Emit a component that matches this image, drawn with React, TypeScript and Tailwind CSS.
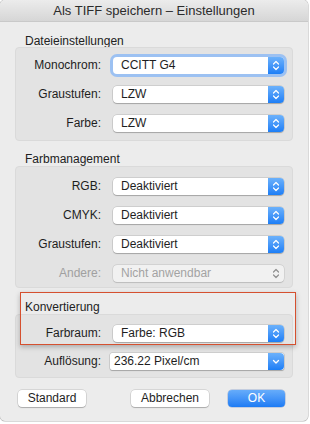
import React from 'react'

const font = { fontFamily: '"Liberation Sans", Arial, sans-serif' }

function UpDown({ color = 'white' }: { color?: string }) {
    return (
        <svg width="8" height="11" viewBox="0 0 8 11" fill="none">
            <path d="M1.5 4 L4 1.5 L6.5 4" stroke={color} strokeWidth="1.2" strokeLinecap="round" strokeLinejoin="round" />
            <path d="M1.5 7 L4 9.5 L6.5 7" stroke={color} strokeWidth="1.2" strokeLinecap="round" strokeLinejoin="round" />
        </svg>
    )
}

function Down() {
    return (
        <svg width="8" height="6" viewBox="0 0 8 6" fill="none">
            <path d="M1.5 1.5 L4 4 L6.5 1.5" stroke="white" strokeWidth="1.3" strokeLinecap="round" strokeLinejoin="round" />
        </svg>
    )
}

function Popup({ value, focused, disabled }: { value: string; focused?: boolean; disabled?: boolean }) {
    return (
        <div className={`flex h-[17px] w-[171px] items-center rounded-[4px] ${disabled ? 'bg-[#f1f1f1] shadow-[0_0_0_0.5px_rgba(0,0,0,0.12),0_0.5px_1px_rgba(0,0,0,0.12)]' : 'bg-white shadow-[0_0_0_0.5px_rgba(0,0,0,0.18),0_1px_1px_rgba(0,0,0,0.2)]'} ${focused ? 'ring-[3px] ring-[#9cc1f2]' : ''}`}>
            <span className={`flex-1 pl-[8px] text-[12px] leading-[17px] ${disabled ? 'text-[#a3a3a3]' : 'text-[#1e1e1e]'}`}>{value}</span>
            {disabled ? (
                <span className="flex h-[17px] w-[16px] items-center justify-center">
                    <UpDown color="#8f8f8f" />
                </span>
            ) : (
                <span className="flex h-[17px] w-[16px] items-center justify-center rounded-r-[4px] bg-gradient-to-b from-[#6bb1fb] to-[#1b7ef6]">
                    <UpDown />
                </span>
            )}
        </div>
    )
}

function Row({ label, children, disabled }: { label: string; children: React.ReactNode; disabled?: boolean }) {
    return (
        <div className="flex h-[17px] items-center">
            <span className={`w-[85px] text-right text-[12px] leading-[17px] ${disabled ? 'text-[#a0a0a0]' : 'text-[#1e1e1e]'}`}>{label}</span>
            <div className="ml-[12px]">{children}</div>
        </div>
    )
}

function Button({ label, primary, w }: { label: string; primary?: boolean; w: string }) {
    return (
        <div className={`flex h-[17px] ${w} items-center justify-center rounded-[4px] text-[12px] leading-[17px] ${primary ? 'bg-gradient-to-b from-[#66acfa] to-[#1b7bf4] text-white shadow-[0_0_0_0.5px_rgba(0,60,160,0.35)]' : 'bg-white text-[#1e1e1e] shadow-[0_0_0_0.5px_rgba(0,0,0,0.18),0_1px_1px_rgba(0,0,0,0.2)]'}`}>
            {label}
        </div>
    )
}

export default function App() {
    return (
        <div className="h-[424px] w-[310px] bg-white" style={font}>
            <div className="flex h-[421px] w-[308px] flex-col overflow-hidden rounded-[5px] bg-[#ececec] shadow-[0_0_0_0.5px_rgba(0,0,0,0.3)]">
                {/* title bar */}
                <div className="flex h-[22px] items-center justify-center border-b border-[#c9c9c9] bg-gradient-to-b from-[#ececec] to-[#d6d6d6] text-[13px] leading-[22px] text-[#2b2b2b]">
                    Als TIFF speichern – Einstellungen
                </div>

                <div className="flex flex-col px-[15px]">
                    {/* Dateieinstellungen */}
                    <div className="h-[25px] pl-[10px] pt-[12px] text-[12px] leading-[14px] text-[#222]">Dateieinstellungen</div>
                    <div className="flex flex-col gap-[12px] rounded-[4px] border border-[#dadada] bg-[#e3e3e3] pb-[8px] pt-[9px]">
                        <Row label="Monochrom:"><Popup value="CCITT G4" focused /></Row>
                        <Row label="Graustufen:"><Popup value="LZW" /></Row>
                        <Row label="Farbe:"><Popup value="LZW" /></Row>
                    </div>

                    {/* Farbmanagement */}
                    <div className="h-[25px] pl-[10px] pt-[11px] text-[12px] leading-[14px] text-[#222]">Farbmanagement</div>
                    <div className="flex flex-col gap-[12px] rounded-[4px] border border-[#dadada] bg-[#e3e3e3] pb-[5px] pt-[11px]">
                        <Row label="RGB:"><Popup value="Deaktiviert" /></Row>
                        <Row label="CMYK:"><Popup value="Deaktiviert" /></Row>
                        <Row label="Graustufen:"><Popup value="Deaktiviert" /></Row>
                        <Row label="Andere:" disabled><Popup value="Nicht anwendbar" disabled /></Row>
                    </div>

                    {/* Konvertierung */}
                    <div className="relative">
                        <div className="h-[26px] pl-[10px] pt-[12px] text-[12px] leading-[14px] text-[#222]">Konvertierung</div>
                        <div className="flex flex-col gap-[11px] rounded-[4px] border border-[#dadada] bg-[#e3e3e3] pb-[7px] pt-[10px]">
                            <Row label="Farbraum:"><Popup value="Farbe: RGB" /></Row>
                            <div className="flex h-[17px] items-center">
                                <span className="w-[85px] text-right text-[12px] leading-[17px] text-[#1e1e1e]">Auflösung:</span>
                                <div className="ml-[9px] flex h-[17px] w-[174px] items-center rounded-[2px] bg-white shadow-[0_0_0_0.5px_rgba(0,0,0,0.18),0_1px_1px_rgba(0,0,0,0.2)]">
                                    <span className="flex-1 pl-[4px] text-[12px] leading-[17px] text-[#1e1e1e]">236.22 Pixel/cm</span>
                                    <span className="flex h-[17px] w-[16px] items-center justify-center rounded-r-[4px] bg-gradient-to-b from-[#6bb1fb] to-[#1b7ef6]">
                                        <Down />
                                    </span>
                                </div>
                            </div>
                        </div>
                        {/* highlight */}
                        <div className="pointer-events-none absolute left-[5px] top-[4px] h-[53px] w-[276px] border-[1.5px] border-[#d5502f] shadow-[0_2px_5px_rgba(0,0,0,0.25)]" />
                    </div>

                    {/* buttons */}
                    <div className="mt-[12px] flex items-center pl-[3px] pr-[8px]">
                        <Button label="Standard" w="w-[68px]" />
                        <div className="ml-auto flex gap-[19px]">
                            <Button label="Abbrechen" w="w-[78px]" />
                            <Button label="OK" primary w="w-[57px]" />
                        </div>
                    </div>
                </div>
            </div>
        </div>
    )
}
